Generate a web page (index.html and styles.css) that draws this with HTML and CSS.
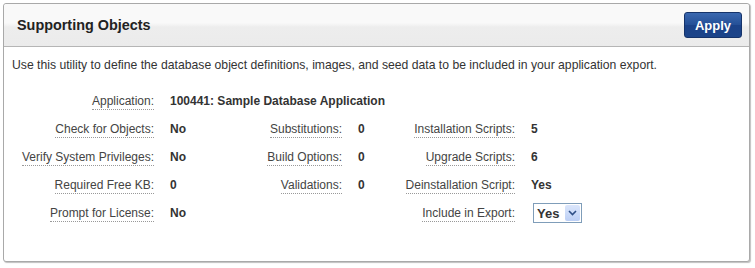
FILE: index.html
```html
<!DOCTYPE html>
<html>
<head>
<title>Supporting Objects</title>
<link rel="stylesheet" href="styles.css">
</head>
<body>
<div class="region">
  <div class="region-header">
    <h2 class="region-title">Supporting Objects</h2>
    <button class="button-hot">Apply</button>
  </div>
  <div class="region-body">
    <p class="instr">Use this utility to define the database object definitions, images, and seed data to be included in your application export.</p>
    <div class="form">
      <div class="lbl"><span>Application:</span></div>
      <div class="val wide">100441: Sample Database Application</div>

      <div class="lbl"><span>Check for Objects:</span></div>
      <div class="val">No</div>
      <div class="lbl"><span>Substitutions:</span></div>
      <div class="val">0</div>
      <div class="lbl"><span>Installation Scripts:</span></div>
      <div class="val">5</div>

      <div class="lbl"><span>Verify System Privileges:</span></div>
      <div class="val">No</div>
      <div class="lbl"><span>Build Options:</span></div>
      <div class="val">0</div>
      <div class="lbl"><span>Upgrade Scripts:</span></div>
      <div class="val">6</div>

      <div class="lbl"><span>Required Free KB:</span></div>
      <div class="val">0</div>
      <div class="lbl"><span>Validations:</span></div>
      <div class="val">0</div>
      <div class="lbl"><span>Deinstallation Script:</span></div>
      <div class="val">Yes</div>

      <div class="lbl"><span>Prompt for License:</span></div>
      <div class="val">No</div>
      <div class="lbl"></div>
      <div class="val"></div>
      <div class="lbl"><span>Include in Export:</span></div>
      <div class="val">
        <span class="select">Yes<span class="arrow"><svg width="9" height="6" viewBox="0 0 9 6"><path d="M1 1 L4.5 4.5 L8 1" fill="none" stroke="#2e4f86" stroke-width="1.6"/></svg></span></span>
      </div>
    </div>
  </div>
</div>
</body>
</html>
```

FILE: styles.css
```css
/* Supporting Objects region */

body
{ margin: 0;
padding: 3px 5px 6px 3px;
background-color: #fff;
font-family: "Liberation Sans", Arial, sans-serif;
color: #333;
}

div.region
{ border: 1px solid #a9a9a9;
border-radius: 3px;
box-shadow: 1px 1px 1px rgba(0,0,0,0.25);
background-color: #fff;
height: 259px;
box-sizing: border-box;
}

div.region-header
{ display: flex;
align-items: center;
justify-content: space-between;
height: 42px;
padding: 0 7px 0 13px;
border-bottom: 1px solid #b5b5b5;
background: linear-gradient(#f9f9f9, #f9f9f9 45%, #ededed 55%, #ebebeb);
border-radius: 3px 3px 0 0;
}

h2.region-title
{ margin: 0;
font-size: 14.4px;
font-weight: bold;
color: #222;
}

button.button-hot
{ font-family: inherit;
font-size: 13px;
font-weight: bold;
color: #fff;
width: 58px;
height: 26px;
padding: 0;
border: 1px solid #15336a;
border-radius: 3px;
background: linear-gradient(#3a68b0, #244f96 50%, #1b4289 51%, #1c4489);
}

div.region-body
{ padding: 11px 8px 0 8px;
}

p.instr
{ margin: 0 0 15px 0;
font-size: 12.2px;
color: #333;
}

div.form
{ display: grid;
grid-template-columns: 142px 60px 96px 22px 119px auto;
column-gap: 16px;
grid-auto-rows: 28px;
align-items: center;
font-size: 12px;
}

div.lbl
{ text-align: right;
color: #444;
white-space: nowrap;
}

div.lbl span
{ border-bottom: 1px dotted #999;
padding-bottom: 1px;
}

div.val
{ font-weight: bold;
color: #333;
white-space: nowrap;
}

div.val.wide
{ grid-column: 2 / 7;
}

span.select
{ display: inline-flex;
align-items: center;
gap: 6px;
height: 18px;
margin-left: 2px;
padding: 0 1px 0 3px;
border: 1px solid #7f9db9;
font-size: 13px;
}

span.arrow
{ display: inline-flex;
align-items: center;
justify-content: center;
width: 15px;
height: 16px;
background: linear-gradient(#dbe6fb, #bccff5);
border-radius: 2px;
}
```
